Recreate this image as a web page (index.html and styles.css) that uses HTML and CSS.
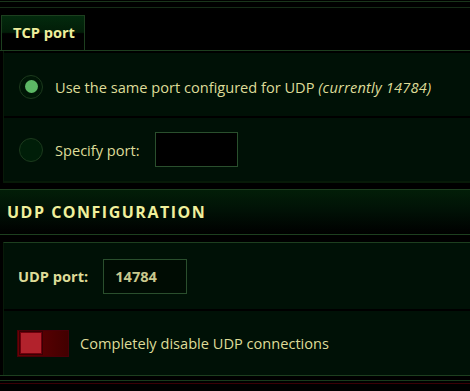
FILE: index.html
```html
<!DOCTYPE html>
<html>
<head>
<meta charset="utf-8">
<link rel="stylesheet" href="styles.css">
</head>
<body>
<div class="topbar"></div>
<div class="tabs"><div class="tab">TCP port</div></div>
<div class="panel panel-tcp">
  <div class="row row-first">
    <span class="radio checked"><span class="dot"></span></span>
    <span class="label">Use the same port configured for UDP <em>(currently 14784)</em></span>
  </div>
  <div class="row">
    <span class="radio"></span>
    <span class="label">Specify port:</span>
    <span class="input input-tcp"></span>
  </div>
</div>
<div class="gap"></div>
<div class="section-head">UDP CONFIGURATION</div>
<div class="panel panel-udp">
  <div class="row row-udp">
    <span class="label strong">UDP port:</span>
    <span class="input input-udp">14784</span>
  </div>
  <div class="row row-toggle">
    <span class="toggle"><span class="knob"></span></span>
    <span class="label">Completely disable UDP connections</span>
  </div>
</div>
<div class="footer"></div>
</body>
</html>
```

FILE: styles.css
```css
html, body {
  margin: 0;
  padding: 0;
  background: #000;
}
body {
  width: 470px;
  height: 391px;
  overflow: hidden;
  font-family: "Open Sans", "Noto Sans", sans-serif;
  font-size: 14.6px;
  color: #dedc98;
}
.topbar {
  height: 15px;
  background: linear-gradient(to bottom,
    transparent 1px, #1a351b 1px, #1a351b 2px, transparent 2px,
    transparent 7px, #152c16 7px, #152c16 8px, transparent 8px);
}
.tabs {
  display: flex;
  height: 35px;
  border-bottom: 1px solid #1d3f1f;
}
.tab {
  box-sizing: border-box;
  margin-left: 1px;
  width: 84px;
  height: 35px;
  border: 1px solid #1d3f1f;
  border-bottom: none;
  padding: 6px 0 0 11px;
  font-weight: 700;
  color: #eeee9c;
  background: linear-gradient(to bottom, #032a0d 0, #021d08 48%, #000 52%, #000 100%);
}
.panel {
  margin-left: 3px;
  border-left: 1px solid #081a09;
  background: #000;
}
.panel-tcp {
  padding-top: 2px;
  border-bottom: 2px solid #071a08;
}
.row {
  display: flex;
  align-items: center;
  background: #001106;
  padding-left: 15px;
}
.panel-tcp .row {
  box-sizing: border-box;
  height: 63px;
  margin-bottom: 2px;
}
.panel-tcp .row-first {
  padding-top: 4px;
}
.panel-tcp .row:last-child {
  margin-bottom: 0;
}
.radio {
  box-sizing: border-box;
  width: 24px;
  height: 24px;
  border-radius: 50%;
  border: 1px solid #1c3a1d;
  background: #001e08;
  display: flex;
  align-items: center;
  justify-content: center;
  margin-right: 12px;
  flex: none;
}
.radio.checked {
  background: #001606;
}
.dot {
  width: 13px;
  height: 13px;
  border-radius: 50%;
  background: #5cb865;
}
.label em {
  font-style: italic;
  letter-spacing: 0.2px;
}
.input {
  box-sizing: border-box;
  height: 35px;
  border: 1px solid #2a4f2d;
  background: #000;
}
.input-tcp {
  width: 83px;
  margin-left: 15px;
}
.gap {
  height: 6px;
}
.section-head {
  box-sizing: border-box;
  height: 46px;
  border-top: 1px solid #1d3f1f;
  border-bottom: 1px solid #1d3f1f;
  background: linear-gradient(to bottom, #021e08 0, #011206 45%, #000 100%);
  display: flex;
  align-items: center;
  padding-left: 7px;
  font-weight: 700;
  font-size: 16px;
  letter-spacing: 1.5px;
  color: #f0f09c;
}
.panel-udp {
  margin-top: 7px;
  border-top: 1px solid #1d3f1f;
}
.row-udp {
  height: 66px;
  padding-left: 14px;
  margin-bottom: 2px;
}
.strong {
  font-weight: 700;
}
.input-udp {
  width: 84px;
  margin-left: 15px;
  background: #000c03;
  display: flex;
  align-items: center;
  padding-left: 11px;
  font-weight: 700;
  color: #c9c98e;
}
.row-toggle {
  height: 64px;
  padding-left: 13px;
}
.toggle {
  box-sizing: border-box;
  width: 52px;
  height: 27px;
  border: 1px solid #4a0008;
  background: linear-gradient(to right, #6a0004, #420000);
  padding: 1px 2px;
  margin-right: 11px;
  flex: none;
  display: flex;
  align-items: center;
}
.knob {
  box-sizing: border-box;
  width: 22px;
  height: 22px;
  border: 1px solid #6e000c;
  outline: 1px solid #3a0004;
  background: #b2222c;
}
.footer {
  height: 15px;
  border-top: 1px solid #1d3f1f;
  background: linear-gradient(to bottom,
    transparent 4px, #1a3a1c 4px, #1a3a1c 5px, transparent 5px,
    transparent 7px, #3a0006 7px, #3a0006 8px, transparent 8px);
}
```
